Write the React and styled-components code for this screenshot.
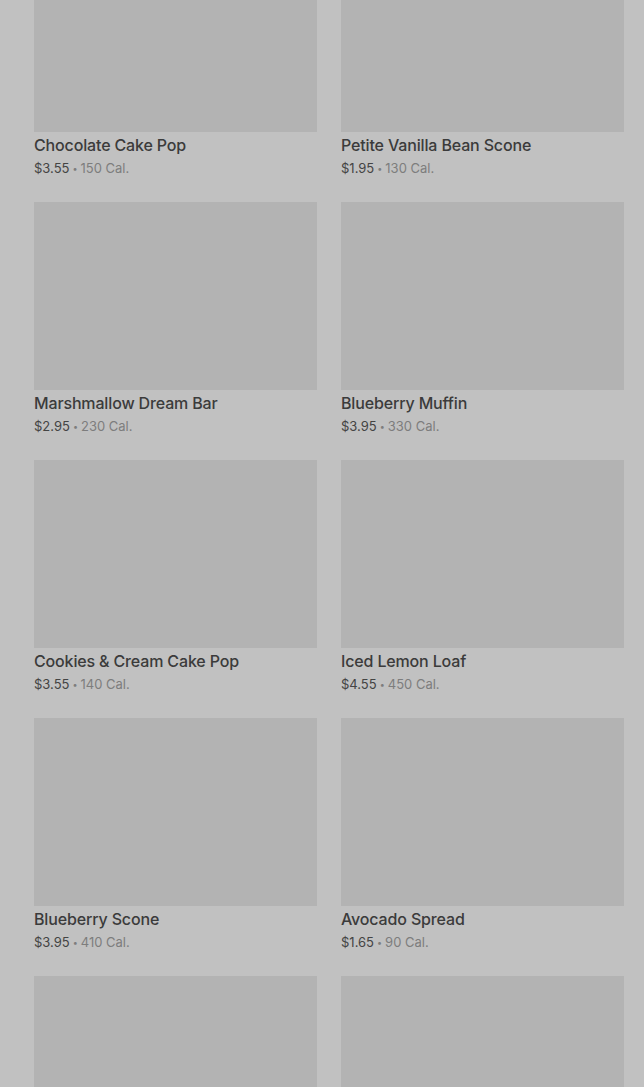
import React from "react";
import styled, { createGlobalStyle } from "styled-components";

const GlobalStyle = createGlobalStyle`
  html, body {
    margin: 0;
    padding: 0;
    background: #c1c1c1;
    overflow: hidden;
  }
  body {
    font-family: "Inter", "Roboto", "Liberation Sans", sans-serif;
    -webkit-font-smoothing: antialiased;
  }
`;

const Page = styled.div`
  height: 1087px;
  overflow: hidden;
  background: #c1c1c1;
`;

const Grid = styled.div`
  display: grid;
  grid-template-columns: 283px 283px;
  column-gap: 24px;
  row-gap: 24px;
  padding: 0 20px 0 34px;
  margin-top: -56px;
`;

const Card = styled.div`
  display: flex;
  flex-direction: column;
`;

const Thumb = styled.div`
  height: 188px;
  background: #b3b3b3;
`;

const Name = styled.div`
  margin-top: 3px;
  font-size: 16px;
  line-height: 20px;
  font-weight: 500;
  color: #3b3b3b;
  letter-spacing: -0.15px;
`;

const Meta = styled.div`
  margin-top: 4px;
  font-size: 13px;
  line-height: 18px;
  color: #444;
`;

const Dot = styled.span`
  font-size: 9px;
  color: #7d7d7d;
  margin: 0 3px;
  vertical-align: 1px;
`;

const Cal = styled.span`
  color: #7d7d7d;
`;

const items = [
  ["Chocolate Cake Pop", "$3.55", "150"],
  ["Petite Vanilla Bean Scone", "$1.95", "130"],
  ["Marshmallow Dream Bar", "$2.95", "230"],
  ["Blueberry Muffin", "$3.95", "330"],
  ["Cookies & Cream Cake Pop", "$3.55", "140"],
  ["Iced Lemon Loaf", "$4.55", "450"],
  ["Blueberry Scone", "$3.95", "410"],
  ["Avocado Spread", "$1.65", "90"],
  ["", "", ""],
  ["", "", ""],
];

export default function App() {
  return (
    <Page>
      <GlobalStyle />
      <Grid>
        {items.map(([name, price, cal], i) => (
          <Card key={i}>
            <Thumb />
            {name && <Name>{name}</Name>}
            {name && (
              <Meta>
                {price}
                <Dot>•</Dot>
                <Cal>{cal} Cal.</Cal>
              </Meta>
            )}
          </Card>
        ))}
      </Grid>
    </Page>
  );
}
